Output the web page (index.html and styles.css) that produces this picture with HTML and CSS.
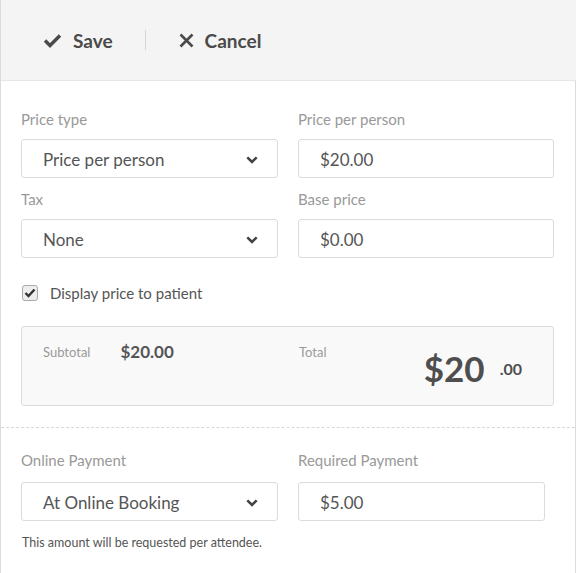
FILE: index.html
```html
<!DOCTYPE html>
<html>
<head>
<meta charset="utf-8">
<link rel="stylesheet" href="styles.css">
</head>
<body>
<div class="panel">
  <div class="toolbar">
    <button class="tb-btn">
      <svg class="ico" width="19" height="15" viewBox="0 0 19 15"><path d="M2 7.5 L7 12.5 L17 2.5" fill="none" stroke="#4a4a4a" stroke-width="3.4" stroke-linejoin="miter"/></svg>
      <span>Save</span>
    </button>
    <span class="tb-sep"></span>
    <button class="tb-btn">
      <svg class="ico" width="15" height="15" viewBox="0 0 15 15"><path d="M1.5 1.5 L13.5 13.5 M13.5 1.5 L1.5 13.5" fill="none" stroke="#4a4a4a" stroke-width="2.6"/></svg>
      <span>Cancel</span>
    </button>
  </div>
  <div class="body">
    <div class="section">
      <div class="grid">
        <div class="field">
          <div class="label">Price type</div>
          <div class="control select"><span>Price per person</span><svg class="chev" width="12" height="8" viewBox="0 0 12 8"><path d="M1.3 1.3 L6 6 L10.7 1.3" fill="none" stroke="#444" stroke-width="2.6"/></svg></div>
        </div>
        <div class="field">
          <div class="label">Price per person</div>
          <div class="control input"><span>$20.00</span></div>
        </div>
        <div class="field">
          <div class="label">Tax</div>
          <div class="control select"><span>None</span><svg class="chev" width="12" height="8" viewBox="0 0 12 8"><path d="M1.3 1.3 L6 6 L10.7 1.3" fill="none" stroke="#444" stroke-width="2.6"/></svg></div>
        </div>
        <div class="field">
          <div class="label">Base price</div>
          <div class="control input"><span>$0.00</span></div>
        </div>
      </div>
      <label class="check-row">
        <span class="checkbox"><svg width="12" height="10" viewBox="0 0 12 10"><path d="M1.5 5 L4.5 8 L10.5 1.5" fill="none" stroke="#333" stroke-width="2.4"/></svg></span>
        <span>Display price to patient</span>
      </label>
      <div class="summary">
        <div class="sum-col">
          <span class="sum-label">Subtotal</span>
          <span class="sum-sub">$20.00</span>
        </div>
        <div class="sum-col total-col">
          <span class="sum-label">Total</span>
          <span class="sum-total"><span class="big">$20</span><span class="cents">.00</span></span>
        </div>
      </div>
    </div>
    <div class="section second">
      <div class="grid grid2">
        <div class="field">
          <div class="label">Online Payment</div>
          <div class="control select"><span>At Online Booking</span><svg class="chev" width="12" height="8" viewBox="0 0 12 8"><path d="M1.3 1.3 L6 6 L10.7 1.3" fill="none" stroke="#444" stroke-width="2.6"/></svg></div>
        </div>
        <div class="field narrow">
          <div class="label">Required Payment</div>
          <div class="control input"><span>$5.00</span></div>
        </div>
      </div>
      <div class="help">This amount will be requested per attendee.</div>
    </div>
  </div>
</div>
</body>
</html>
```

FILE: styles.css
```css
* { box-sizing: border-box; }
html, body { margin: 0; padding: 0; background: #fff; }
body {
  font-family: Lato, "Open Sans", sans-serif;
  color: #555;
  width: 576px;
  height: 573px;
  overflow: hidden;
}
.panel {
  border-left: 1px solid #dcdcdc;
  height: 573px;
}
.toolbar {
  height: 81px;
  background: #f4f4f4;
  border-bottom: 1px solid #e6e6e6;
  display: flex;
  align-items: center;
  padding-left: 42px;
}
.tb-btn {
  display: flex;
  align-items: center;
  gap: 11px;
  background: none;
  border: 0;
  padding: 0;
  font-family: inherit;
  font-size: 19px;
  font-weight: 700;
  color: #4a4a4a;
}
.tb-sep {
  width: 1px;
  height: 20px;
  background: #d6d6d6;
  margin: 0 33px 0 32px;
}
.body {
  border-right: 1px solid #dcdcdc;
  height: 492px;
  width: 575px;
}
.section {
  padding: 28px 21px 21px 20px;
  border-bottom: 1px dashed #d8d8d8;
}
.section.second {
  border-bottom: 0;
  padding-top: 22px;
}
.grid {
  display: grid;
  grid-template-columns: 257px 256px;
  column-gap: 20px;
  row-gap: 11px;
}
.label {
  font-size: 15px;
  line-height: 20px;
  color: #999;
  margin-bottom: 10px;
}
.grid2 .label { margin-bottom: 12px; }
.control {
  height: 39px;
  border: 1px solid #dcdcdc;
  border-radius: 3px;
  background: #fff;
  display: flex;
  align-items: center;
  padding: 2px 19px 0 21px;
  font-size: 17px;
  color: #555;
}
.select { justify-content: space-between; }
.narrow .control { width: 247px; }
.check-row {
  display: flex;
  align-items: center;
  gap: 12px;
  margin-top: 26px;
  padding-left: 1px;
  font-size: 15px;
  color: #555;
  height: 18px;
}
.checkbox {
  width: 16px;
  height: 16px;
  border: 1px solid #aaa;
  border-radius: 3px;
  background: #eee;
  display: flex;
  align-items: center;
  justify-content: center;
}
.summary {
  margin-top: 24px;
  height: 80px;
  background: #f9f9f9;
  border: 1px solid #dcdcdc;
  border-radius: 3px;
  display: grid;
  grid-template-columns: 236px 1fr;
  column-gap: 20px;
  padding: 14px 31px 0 21px;
}
.sum-col {
  display: flex;
  align-items: flex-start;
}
.sum-label {
  font-size: 13px;
  color: #999;
  line-height: 22px;
}
.sum-sub {
  margin-left: 30px;
  font-size: 17px;
  font-weight: 700;
  color: #555;
  line-height: 22px;
}
.total-col { justify-content: space-between; }
.sum-total {
  display: flex;
  align-items: flex-start;
  margin-top: 7px;
}
.big {
  font-size: 35px;
  font-weight: 700;
  color: #4e4e4e;
  line-height: 40px;
}
.cents {
  font-size: 16px;
  font-weight: 700;
  color: #4e4e4e;
  margin-left: 15px;
  margin-top: 11px;
}
.help {
  margin-top: 14px;
  font-size: 12.5px;
  color: #555;
  padding-left: 1px;
}
```
